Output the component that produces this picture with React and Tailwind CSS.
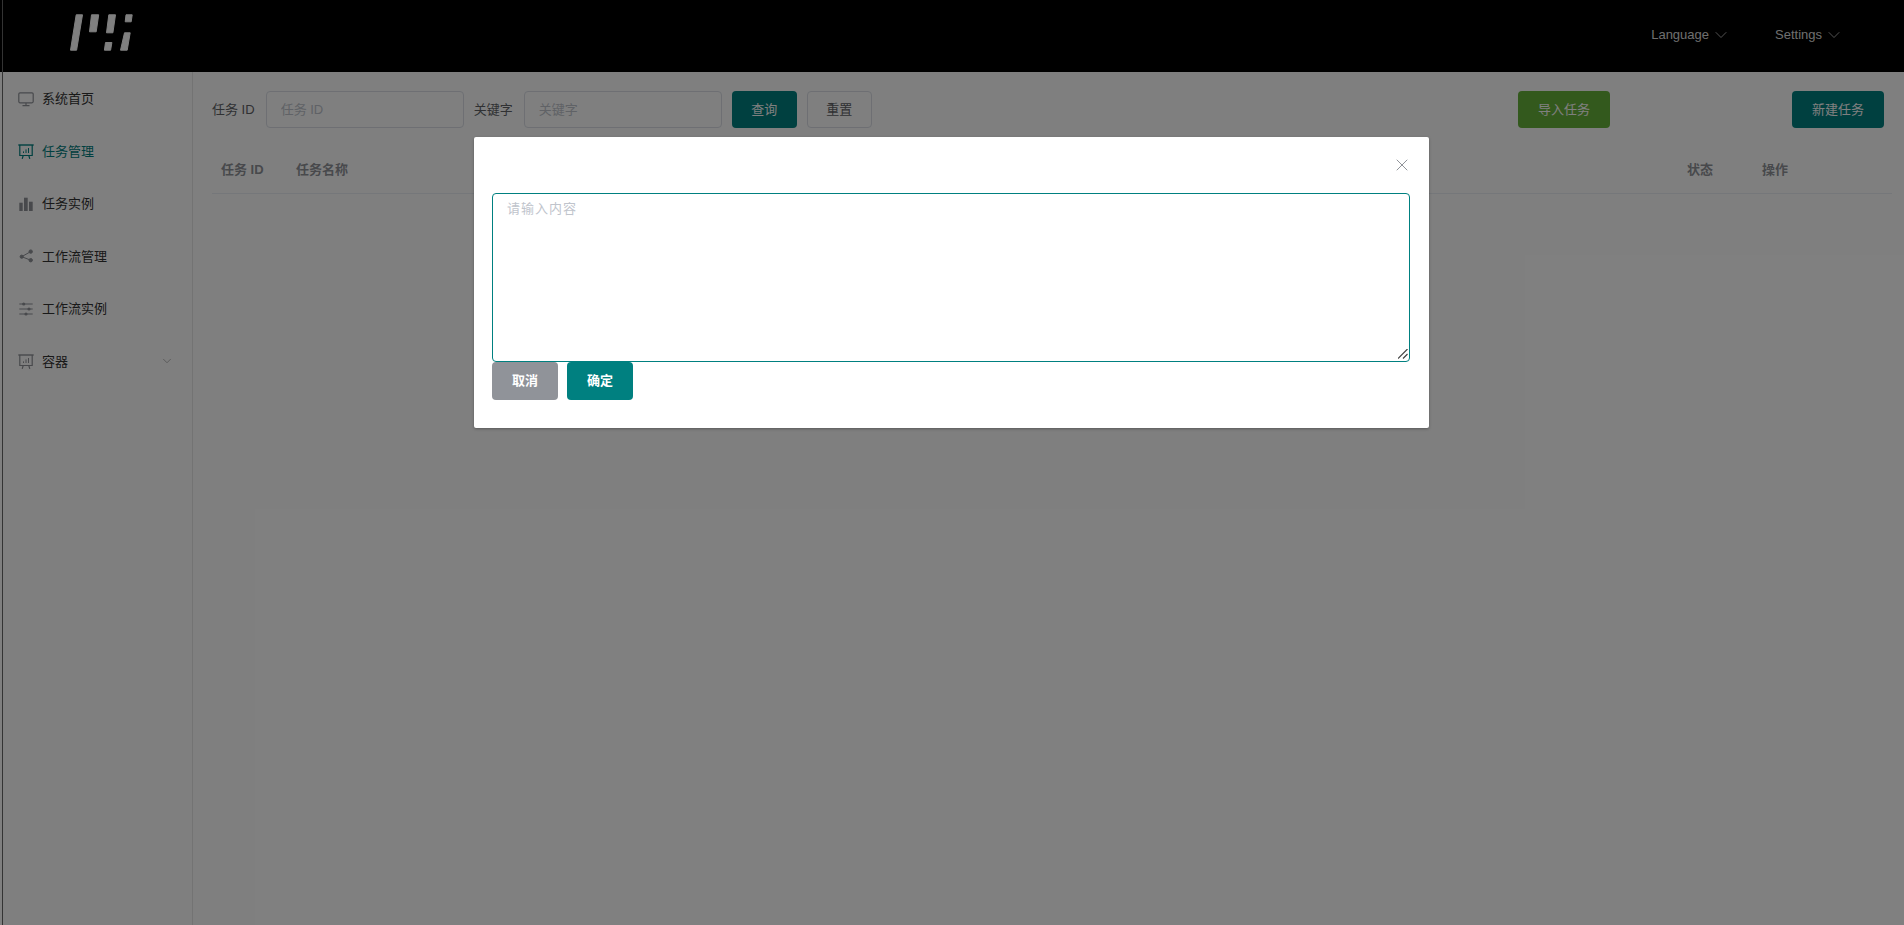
import { ChevronDown, X } from "lucide-react";

function MonitorIcon({ className }) {
  return (
    <svg viewBox="0 0 16 16" className={className} fill="none" stroke="currentColor" strokeWidth="1.2">
      <rect x="0.8" y="1.8" width="14.4" height="10" rx="1.2" />
      <path d="M8 12v2.5M4.5 14.6h7" />
    </svg>
  );
}

function BoardIcon({ className }) {
  return (
    <svg viewBox="0 0 16 16" className={className} fill="none" stroke="currentColor" strokeWidth="1.2">
      <path d="M0.3 2h15.4" strokeWidth="1.4" />
      <path d="M1.8 2v10.5h12.4V2M5.2 12.5l-1 3.3M10.8 12.5l1 3.3" />
      <path d="M5.5 10V8.4M8 10V6.4M10.5 10V5" strokeWidth="1" />
    </svg>
  );
}

function BarsIcon({ className }) {
  return (
    <svg viewBox="0 0 16 16" className={className} fill="currentColor">
      <rect x="1.3" y="6.7" width="3.4" height="8.3" />
      <rect x="6" y="1.7" width="3.7" height="13.3" />
      <rect x="11" y="5.7" width="3.7" height="9.3" />
    </svg>
  );
}

function ShareIcon({ className }) {
  return (
    <svg viewBox="0 0 16 16" className={className} fill="currentColor" stroke="currentColor">
      <circle cx="3.7" cy="8.7" r="1.6" />
      <circle cx="12.7" cy="3.6" r="1.7" />
      <circle cx="12.7" cy="12.2" r="1.7" />
      <path d="M3.7 8.7l9-5.1M3.7 8.7l9 3.5" fill="none" />
    </svg>
  );
}

function SlidersIcon({ className }) {
  return (
    <svg viewBox="0 0 16 16" className={className} fill="currentColor">
      <rect x="1.3" y="2.5" width="13.4" height="1" />
      <rect x="1.3" y="7.5" width="13.4" height="1" />
      <rect x="1.3" y="12.5" width="13.4" height="1" />
      <circle cx="5.7" cy="3" r="1.6" />
      <circle cx="11" cy="8" r="1.6" />
      <circle cx="8" cy="13" r="1.6" />
    </svg>
  );
}

const menu = [
  { label: "系统首页", icon: MonitorIcon },
  { label: "任务管理", icon: BoardIcon, active: true },
  { label: "任务实例", icon: BarsIcon },
  { label: "工作流管理", icon: ShareIcon },
  { label: "工作流实例", icon: SlidersIcon },
  { label: "容器", icon: BoardIcon, arrow: true },
];

function Logo() {
  return (
    <svg width="68" height="48" viewBox="0 0 68 48" className="ml-[68px] fill-white stroke-white" strokeWidth="1" strokeLinejoin="round">
      <path d="M8.2 2.8h6.3L8.6 38.2H2.5z" />
      <path d="M23.5 2.8h7.2l-2.5 17h-6.7z" />
      <path d="M40.8 2.8h6.7l-2.6 18h-6.4z" />
      <path d="M37.5 30.5h6.4l-1.3 7.7h-6.2z" />
      <path d="M58 2.8h6.2l-1 7h-6z" />
      <path d="M56.5 20.8h5.7l-3 17.4h-6.7z" />
    </svg>
  );
}

function App() {
  return (
    <div className="relative h-[925px] overflow-hidden bg-white font-['Liberation_Sans','Noto_Sans_CJK_SC',sans-serif] text-[13px] text-[#333]">
      <header className="flex h-[72px] items-center bg-black text-white">
        <Logo />
        <div className="ml-auto mr-[60px] flex items-center gap-[44px] pb-[2px] text-[13px] text-[#ddd]">
          <div className="flex items-center gap-[2px]">
            Language <ChevronDown size={20} strokeWidth={0.9} />
          </div>
          <div className="flex items-center gap-[2px]">
            Settings <ChevronDown size={20} strokeWidth={0.9} />
          </div>
        </div>
      </header>

      <div className="flex h-[853px]">
        <aside className="ml-[3px] w-[190px] border-r border-[#e6e6e6] pt-[0.5px]">
          {menu.map((item) => (
            <div
              key={item.label}
              className={`flex h-[52.5px] items-center pl-[15px] pr-[18px] ${item.active ? "text-[#008080]" : "text-[#333]"}`}
            >
              <item.icon className={`h-[16px] w-[16px] ${item.active ? "" : "text-[#909399]"}`} />
              <span className="ml-[8px]">{item.label}</span>
              {item.arrow && <ChevronDown size={14} strokeWidth={1.2} className="ml-auto text-[#999]" />}
            </div>
          ))}
        </aside>

        <main className="flex-1 pl-[19px] pr-[12px] pt-[19px]">
          <div className="mr-[8px] flex h-[37px] items-center">
            <span className="text-[#606266]">任务 ID</span>
            <input
              placeholder="任务 ID"
              className="ml-[11px] h-[37px] w-[198px] rounded border border-[#dcdfe6] px-[14px] text-[13px] placeholder:text-[#c0c4cc]"
            />
            <span className="ml-[10px] text-[#606266]">关键字</span>
            <input
              placeholder="关键字"
              className="ml-[11px] h-[37px] w-[198px] rounded border border-[#dcdfe6] px-[14px] text-[13px] placeholder:text-[#c0c4cc]"
            />
            <button className="ml-[10px] h-[37px] w-[65px] rounded bg-[#008080] text-white">查询</button>
            <button className="ml-[10px] h-[37px] w-[65px] rounded border border-[#dcdfe6] text-[#606266]">重置</button>
            <button className="ml-auto h-[37px] w-[92px] rounded bg-[#67b23a] text-white">导入任务</button>
            <button className="ml-[182px] h-[37px] w-[92px] rounded bg-[#008080] text-white">新建任务</button>
          </div>

          <div className="mt-[19px] flex h-[47px] items-center border-b border-[#ebeef5] font-bold text-[#909399]">
            <span className="ml-[9px] w-[75px]">任务 ID</span>
            <span>任务名称</span>
            <span className="ml-auto w-[75px]">状态</span>
            <span className="mr-[104px] w-[26px]">操作</span>
          </div>
        </main>
      </div>

      {/* thin line down the left edge of the page */}
      <div className="absolute inset-y-0 left-[2px] w-px bg-[#666]" />

      {/* modal */}
      <div className="absolute inset-0 bg-black/50">
        <div className="ml-[474px] mt-[137px] h-[291px] w-[955px] rounded-[2px] bg-white pl-[18px] shadow-[0_1px_3px_rgba(0,0,0,0.3)]">
          <div className="flex h-[56px] w-[918px] items-start justify-end pt-[18px]">
            <X size={20} strokeWidth={1.2} className="-mr-[2px] text-[#909399]" />
          </div>
          <div className="relative w-[918px]">
            <textarea
              placeholder="请输入内容"
              className="block h-[169px] w-full resize-none rounded-[4px] border border-[#008080] px-[14px] py-[5px] text-[13px] tracking-[1px] outline-none placeholder:text-[#c0c4cc]"
            />
            {/* resize grip */}
            <svg width="10" height="10" viewBox="0 0 10 10" className="absolute bottom-[3px] right-[2px] stroke-[#444]" strokeWidth="1.2">
              <path d="M0 9.5L9.5 0M5 9.5L9.5 5" />
            </svg>
          </div>
          <div className="flex gap-[9px]">
            <button className="h-[38px] w-[66px] rounded bg-[#909399] font-bold text-white">取消</button>
            <button className="h-[38px] w-[66px] rounded bg-[#008080] font-bold text-white">确定</button>
          </div>
        </div>
      </div>
    </div>
  );
}

export default App;
